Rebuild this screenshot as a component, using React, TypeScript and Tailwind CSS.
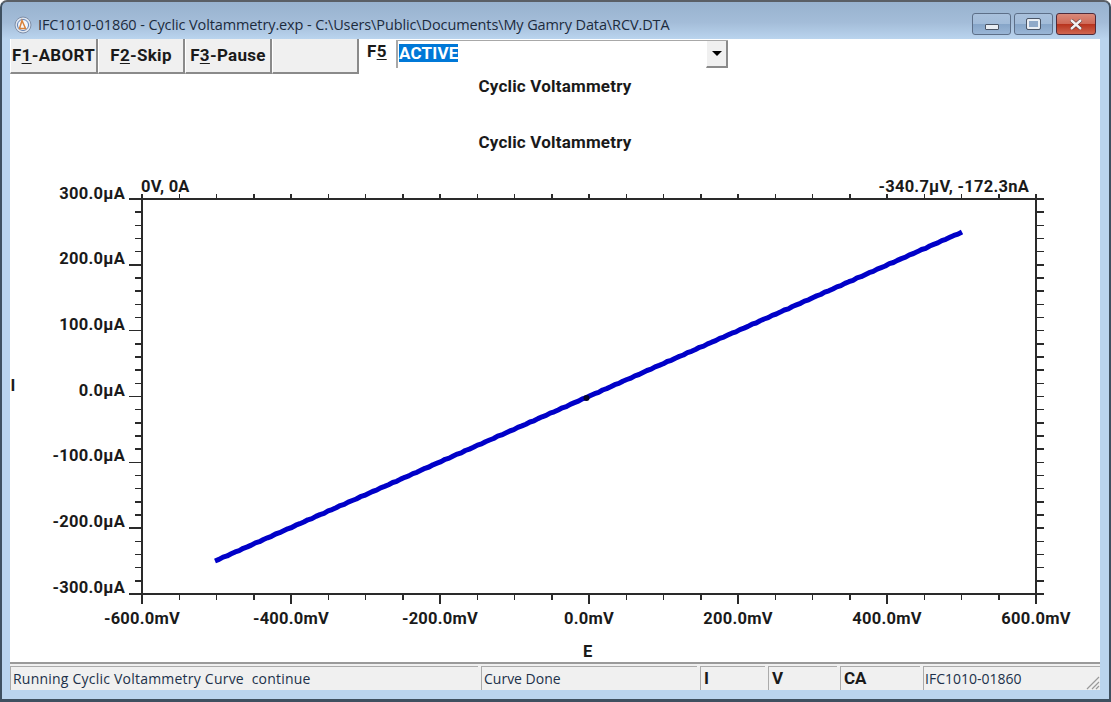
const fontBold = "font-['Roboto','Liberation_Sans',sans-serif] font-bold";

const buttons = [
  { pre: "F", key: "1", post: "-ABORT" },
  { pre: "F", key: "2", post: "-Skip" },
  { pre: "F", key: "3", post: "-Pause" },
  null,
];

const xLabels = ["-600.0mV", "-400.0mV", "-200.0mV", "0.0mV", "200.0mV", "400.0mV", "600.0mV"];
const yLabels = ["300.0µA", "200.0µA", "100.0µA", "0.0µA", "-100.0µA", "-200.0µA", "-300.0µA"];

const LEFT = 142;
const RIGHT = 1036;
const TOP = 199;
const BOTTOM = 594;

// measured curve is a bit noisy, so wobble the points a little
const curve = Array.from({ length: 186 }, (_, i) => {
  const t = i / 185;
  const wobble = i === 0 || i === 185 ? 0 : Math.sin(i * 2.4) * 0.3;
  return `${(215 + t * 747).toFixed(1)},${(561 - t * 329 + wobble).toFixed(1)}`;
}).join(" ");

function Chart() {
  const xStep = (RIGHT - LEFT) / 24;
  const yStep = (BOTTOM - TOP) / 30;
  const xTicks = Array.from({ length: 25 }, (_, i) => i);
  const yTicks = Array.from({ length: 31 }, (_, i) => i);

  return (
    <svg viewBox="10 170 1090 492" className="w-[1090px] h-[492px] block">
      <g stroke="#2a2a2a" strokeWidth="1.5" shapeRendering="crispEdges">
        <rect x={LEFT} y={TOP} width={RIGHT - LEFT} height={BOTTOM - TOP} fill="none" />
        {xTicks.map((i) => {
          const x = LEFT + i * xStep;
          return (
            <g key={i}>
              <line x1={x} x2={x} y1={TOP} y2={TOP - 5} />
              <line x1={x} x2={x} y1={BOTTOM} y2={BOTTOM + (i % 4 === 0 ? 10 : 6)} />
            </g>
          );
        })}
        {yTicks.map((i) => {
          const y = TOP + i * yStep;
          const major = i % 5 === 0;
          return (
            <g key={i}>
              <line x1={LEFT} x2={LEFT - (major ? 13 : 7)} y1={y} y2={y} />
              <line x1={RIGHT} x2={RIGHT + 8} y1={y} y2={y} />
            </g>
          );
        })}
      </g>

      <polyline points={curve} fill="none" stroke="#0000c8" strokeWidth="5" strokeLinejoin="round" />
      <circle cx="586.5" cy="398" r="3" fill="#06062a" />

      <g className={fontBold} fill="#1a1a1a" fontSize="16.5" letterSpacing="0.25">
        {yLabels.map((label, i) => (
          <text key={label} x="125" y={198.5 + i * 65.7} textAnchor="end">
            {label}
          </text>
        ))}
        {xLabels.map((label, i) => (
          <text key={label} x={LEFT + i * 149} y="623.5" textAnchor="middle">
            {label}
          </text>
        ))}
        <text x="141" y="192">0V, 0A</text>
        <text x="1029" y="192" textAnchor="end">-340.7µV, -172.3nA</text>
        <text x="10.5" y="391">I</text>
        <text x="583" y="657">E</text>
      </g>
    </svg>
  );
}

function WindowIcon() {
  return (
    <svg viewBox="0 0 18 18" className="w-[18px] h-[18px] shrink-0">
      <circle cx="9" cy="9" r="8" fill="#dfe6f0" stroke="#7f8fa8" />
      <circle cx="9" cy="9" r="5.5" fill="#f4f7fb" stroke="#5c7fb5" />
      <path d="M8 4.5 L11.5 12.5 L5.5 12.5 Z" fill="none" stroke="#d9823a" strokeWidth="1.5" />
    </svg>
  );
}

function CaptionButtons() {
  return (
    <div className="flex gap-[3px] mt-[11px] mr-[13px] self-start">
      <div className="w-[39px] h-[22px] rounded-[3px] border border-[#5d6f88] bg-[linear-gradient(#a9c1dc_0%,#a2bcd9_48%,#86a5c8_52%,#9ab6d6_100%)] flex items-center justify-center">
        <div className="w-[14px] h-[6px] mt-[5px] bg-[#e8edf3] border border-[#4a5566] rounded-[1px]" />
      </div>
      <div className="w-[39px] h-[22px] rounded-[3px] border border-[#5d6f88] bg-[linear-gradient(#a9c1dc_0%,#a2bcd9_48%,#86a5c8_52%,#9ab6d6_100%)] flex items-center justify-center">
        <div className="w-[13px] h-[10px] bg-[#8fa9c8] border-2 border-[#e8edf3] outline outline-1 outline-[#4a5566] rounded-[1px]" />
      </div>
      <div className="w-[40px] h-[22px] rounded-[3px] border border-[#4f2b3a] bg-[linear-gradient(#d98a7a_0%,#cf6a58_48%,#b8341e_52%,#cf6650_100%)] flex items-center justify-center">
        <svg viewBox="0 0 14 11" className="w-[14px] h-[11px]">
          <path d="M2 1 L12 10 M12 1 L2 10" stroke="#4a2a2a" strokeWidth="3.6" />
          <path d="M2 1 L12 10 M12 1 L2 10" stroke="#f2f2f2" strokeWidth="2.4" />
        </svg>
      </div>
    </div>
  );
}

function Toolbar() {
  return (
    <div className="flex items-start h-[35px]">
      {buttons.map((b, i) => (
        <div
          key={i}
          className={`${fontBold} ${i === 0 ? "w-[88px]" : "w-[87px]"} h-[35px] bg-[#f0f0f0] border-r-2 border-b-2 border-[#8a8a8a] border-l border-l-white flex items-center justify-center text-[17px] tracking-[0.3px] text-[#1a1a1a] pt-[1px]`}
        >
          {b && (
            <span>
              {b.pre}
              <span className="underline underline-offset-2">{b.key}</span>
              {b.post}
            </span>
          )}
        </div>
      ))}
      <div className={`${fontBold} ml-[8px] w-[29px] text-[17px] tracking-[0.3px] text-[#1a1a1a]`}>
        F<span className="underline underline-offset-2">5</span>
      </div>
      <div className="w-[332px] h-[28px] mt-[1px] border-l-2 border-t border-[#a8a8a8] flex items-stretch bg-white">
        <div className="flex-1 pl-[1px] pt-[3px]">
          <div className={`${fontBold} w-[59px] h-[18px] bg-[#0078d7] text-white text-[17px] leading-[18px] tracking-[0.2px]`}>
            ACTIVE
          </div>
        </div>
        <div className="w-[22px] bg-[#f0f0f0] border-r-2 border-b-2 border-[#8a8a8a] border-l border-l-white flex items-center justify-center">
          <div className="w-0 h-0 border-l-[5px] border-r-[5px] border-t-[5px] border-l-transparent border-r-transparent border-t-black" />
        </div>
      </div>
    </div>
  );
}

function StatusBar() {
  const regular = "font-['Open_Sans','Noto_Sans',sans-serif] text-[14px] text-[#20304a]";
  const panel = "h-full border-l border-t border-[#ababab] flex items-center whitespace-nowrap";
  const bold = `${panel} ${fontBold} text-[17px] text-[#1a1a1a] pl-[3px] ml-[3px]`;
  return (
    <div className="h-[28px] border-t-2 border-[#9a9a9a] bg-[#f0f0f0] pt-[2px] flex">
      <div className={`${panel} ${regular} pl-[2px] tracking-[0.22px] w-[468px]`}>Running Cyclic Voltammetry Curve&nbsp; continue</div>
      <div className={`${panel} ${regular} pl-[2px] w-[216px] ml-[3px]`}>Curve Done</div>
      <div className={`${bold} w-[65px]`}>I</div>
      <div className={`${bold} w-[69px]`}>V</div>
      <div className={`${bold} w-[80px]`}>CA</div>
      <div className={`${panel} ${regular} pl-[1px] ml-[3px] flex-1 relative`}>
        IFC1010-01860
        <svg viewBox="0 0 16 16" className="absolute right-0 bottom-0 w-[16px] h-[16px]">
          <path d="M15 3 L3 15 M15 8 L8 15 M15 12 L12 15" stroke="#9a9a9a" strokeWidth="1.2" />
        </svg>
      </div>
    </div>
  );
}

export default function App() {
  return (
    <div className="w-[1111px] h-[702px] overflow-hidden bg-white">
      <div className="w-full h-full rounded-t-[7px] border-[2px] border-b-[3px] border-[#3f5060] border-t-[#5a5f66] bg-[linear-gradient(#98b2cf_0px,#a3bcd8_20px,#bad4ee_37px,#bad4ee_100%)] flex flex-col">
        <div className="h-[37px] flex items-start justify-between shrink-0">
          <div className="flex items-center gap-[6px] pl-[12px] pt-[14px]">
            <WindowIcon />
            <span className="font-['Open_Sans','Noto_Sans',sans-serif] text-[14.5px] tracking-[-0.11px] leading-[18px] text-[#1c2b3d] whitespace-nowrap">
              IFC1010-01860 - Cyclic Voltammetry.exp - C:\Users\Public\Documents\My Gamry Data\RCV.DTA
            </span>
          </div>
          <CaptionButtons />
        </div>
        <div className="mx-[8px] w-[1090px] h-[651px] bg-white flex flex-col shrink-0">
          <Toolbar />
          <div className={`${fontBold} text-[17px] tracking-[0.2px] text-[#1a1a1a] flex flex-col items-center h-[96px]`}>
            <div className="h-[24px] leading-[24px]">Cyclic Voltammetry</div>
            <div className="h-[24px] mt-[32px] leading-[24px]">Cyclic Voltammetry</div>
          </div>
          <Chart />
          <StatusBar />
        </div>
      </div>
    </div>
  );
}
